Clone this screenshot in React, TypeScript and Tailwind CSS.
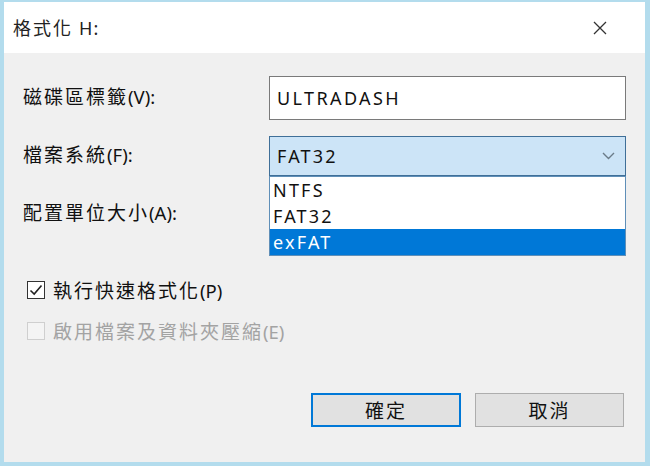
import React from 'react';

const cjk = "font-['Noto_Sans_CJK_TC','Noto_Sans',sans-serif]";
const latin = "font-['Noto_Sans','Noto_Sans_CJK_TC',sans-serif]";

// CJK part spaced out, the "(V):" part kept narrow like the original dialog font
const Label: React.FC<{ text: string; tail: string; className?: string }> = ({ text, tail, className }) => (
  <span className={`text-[19px] leading-none ${className ?? 'text-[#111]'}`}>
    <span className={`${cjk} tracking-[2px]`}>{text}</span>
    <span className={`${latin} text-[18.5px]`}>{tail}</span>
  </span>
);

const Checkbox: React.FC<{ checked?: boolean; disabled?: boolean; text: string; tail: string }> = ({
  checked,
  disabled,
  text,
  tail,
}) => (
  <div className="flex items-center gap-[8px] h-[18px]">
    <div
      className={
        'w-[18px] h-[18px] border flex items-center justify-center ' +
        (disabled ? 'border-[#cfcfcf] bg-[#f4f4f4]' : 'border-[#333333] bg-white')
      }
    >
      {checked && (
        <svg width="14" height="14" viewBox="0 0 14 14">
          <path d="M1.5 7.5 L5.2 11 L12.5 2.5" fill="none" stroke="#222" strokeWidth="1.6" />
        </svg>
      )}
    </div>
    <Label text={text} tail={tail} className={disabled ? 'text-[#a3a3a3]' : 'text-[#111]'} />
  </div>
);

const App: React.FC = () => {
  const options = ['NTFS', 'FAT32', 'exFAT'];

  return (
    <div className="w-[650px] h-[466px] flex flex-col border-t-2 border-l-4 border-r-[5px] border-b-4 border-[#b3dced] bg-[#f0f0f0]">
      {/* title bar */}
      <div className="h-[51px] bg-white flex items-center justify-between pl-[9px] pr-[38px]">
        <span className="text-[18px] text-[#222]">
          <span className={`${cjk} tracking-[2px]`}>格式化 </span>
          <span className={`${latin} tracking-[1px]`}>H:</span>
        </span>
        <svg width="14" height="14" viewBox="0 0 14 14">
          <path d="M1 1 L13 13 M13 1 L1 13" stroke="#333" strokeWidth="1.3" />
        </svg>
      </div>

      {/* body */}
      <div className="flex-1 flex flex-col pl-[19px] pr-[19px] pt-[23px]">
        <div className="flex items-center h-[44px]">
          <div className="w-[246px]">
            <Label text="磁碟區標籤" tail="(V):" />
          </div>
          <div className="flex-1 h-full bg-white border border-[#7a7a7a] flex items-center px-[7px]">
            <span className={`${latin} text-[18px] tracking-[2.4px] text-[#111]`}>ULTRADASH</span>
          </div>
        </div>

        <div className="flex items-center h-[40px] mt-[16px]">
          <div className="w-[246px]">
            <Label text="檔案系統" tail="(F):" />
          </div>
          <div className="relative flex-1 h-full">
            <div className="h-full bg-[#cce4f7] border border-[#3f6f98] flex items-center justify-between pl-[7px] pr-[10px]">
              <span className={`${latin} text-[18px] tracking-[2.2px] text-[#111]`}>FAT32</span>
              <svg width="13" height="8" viewBox="0 0 13 8">
                <path d="M1 1 L6.5 6.5 L12 1" fill="none" stroke="#6b7b88" strokeWidth="1.4" />
              </svg>
            </div>
            <div className="absolute left-0 right-0 top-full bg-white border border-[#5f8fb8] z-10">
              {options.map((o) => (
                <div
                  key={o}
                  className={
                    `${latin} h-[26px] flex items-center pl-[3px] text-[18px] tracking-[2.2px] ` +
                    (o === 'exFAT' ? 'bg-[#0078d7] text-white' : 'text-[#111]')
                  }
                >
                  {o}
                </div>
              ))}
            </div>
          </div>
        </div>

        <div className="flex items-center h-[40px] mt-[16px]">
          <Label text="配置單位大小" tail="(A):" />
        </div>

        <div className="mt-[49px] pl-[4px]">
          <Checkbox checked text="執行快速格式化" tail="(P)" />
        </div>
        <div className="mt-[23px] pl-[4px]">
          <Checkbox disabled text="啟用檔案及資料夾壓縮" tail="(E)" />
        </div>

        <div className="mt-[53px] flex justify-end gap-[14px] pr-[2px]">
          <button className={`${cjk} w-[150px] h-[34px] bg-[#e1e1e1] border-2 border-[#0078d7] text-[19px] tracking-[2px] text-[#111]`}>
            確定
          </button>
          <button className={`${cjk} w-[149px] h-[34px] bg-[#e1e1e1] border border-[#adadad] text-[19px] tracking-[2px] text-[#111]`}>
            取消
          </button>
        </div>
      </div>
    </div>
  );
};

export default App;
